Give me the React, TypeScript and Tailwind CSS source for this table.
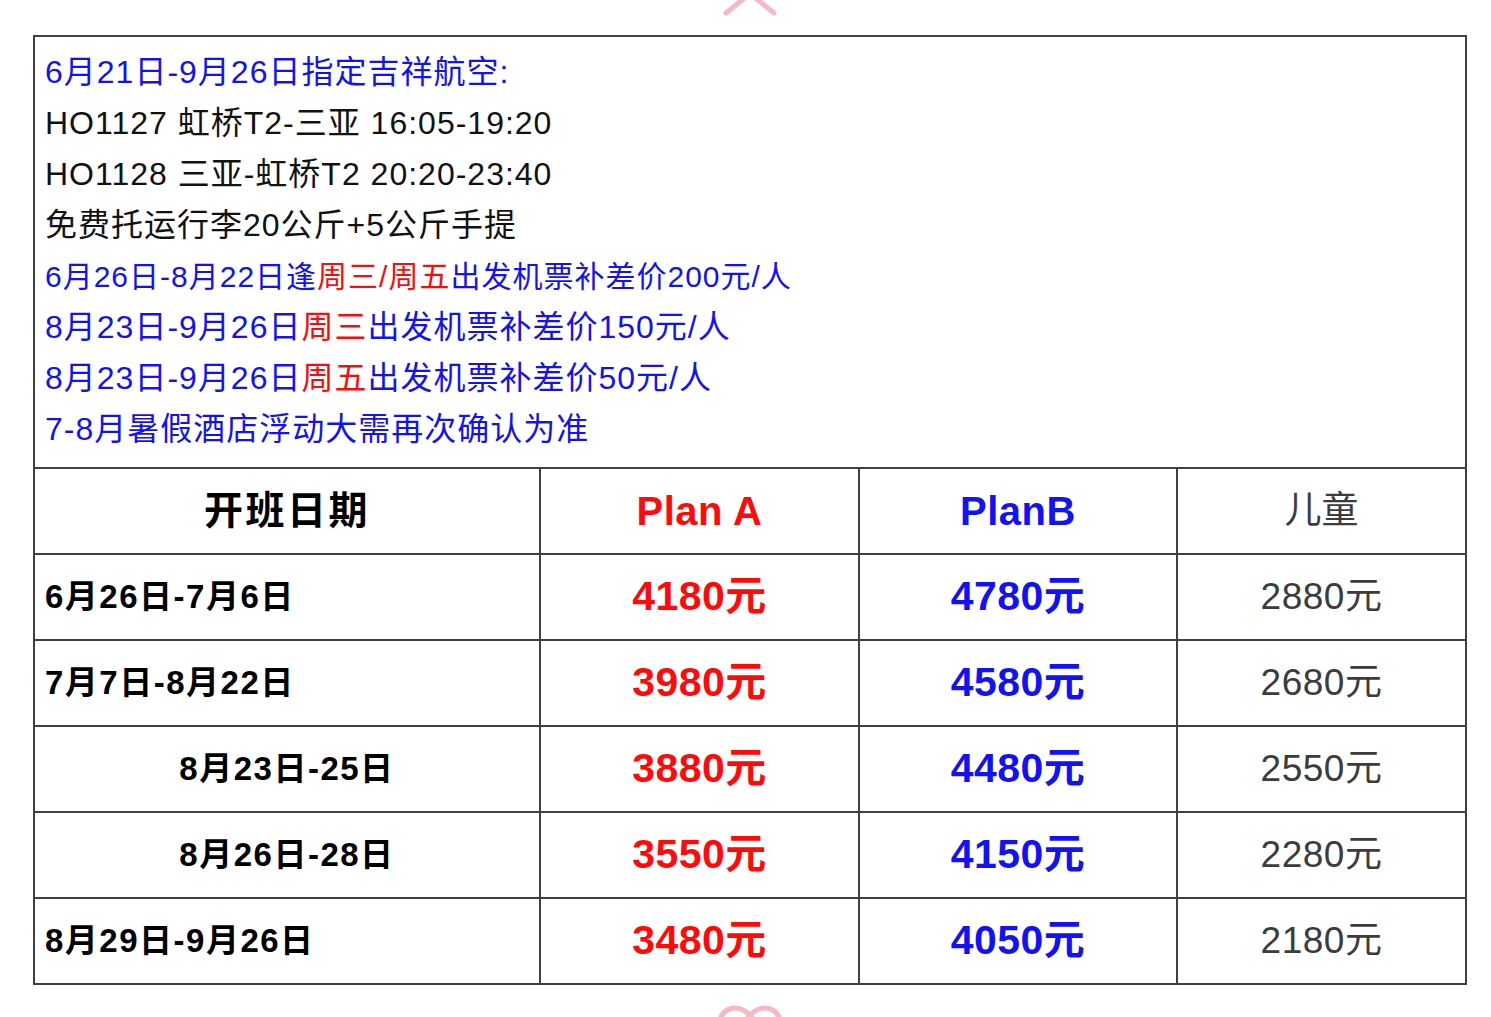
import React from "react";

type Seg = { t: string; red?: boolean };

const notes: { color: string; size: string; segs: Seg[] }[] = [
  { color: "text-[#1212f5]", size: "text-[32px]", segs: [{ t: "6月21日-9月26日指定吉祥航空:" }] },
  { color: "text-[#111]", size: "text-[32px]", segs: [{ t: "HO1127 虹桥T2-三亚 16:05-19:20" }] },
  { color: "text-[#111]", size: "text-[32px]", segs: [{ t: "HO1128 三亚-虹桥T2 20:20-23:40" }] },
  { color: "text-[#111]", size: "text-[32px]", segs: [{ t: "免费托运行李20公斤+5公斤手提" }] },
  {
    color: "text-[#1212f5]",
    size: "text-[30px]",
    segs: [{ t: "6月26日-8月22日逢" }, { t: "周三/周五", red: true }, { t: "出发机票补差价200元/人" }],
  },
  {
    color: "text-[#1212f5]",
    size: "text-[32px]",
    segs: [{ t: "8月23日-9月26日" }, { t: "周三", red: true }, { t: "出发机票补差价150元/人" }],
  },
  {
    color: "text-[#1212f5]",
    size: "text-[32px]",
    segs: [{ t: "8月23日-9月26日" }, { t: "周五", red: true }, { t: "出发机票补差价50元/人" }],
  },
  { color: "text-[#1212f5]", size: "text-[32px]", segs: [{ t: "7-8月暑假酒店浮动大需再次确认为准" }] },
];

const rows = [
  { date: "6月26日-7月6日", center: false, a: "4180元", b: "4780元", kid: "2880元" },
  { date: "7月7日-8月22日", center: false, a: "3980元", b: "4580元", kid: "2680元" },
  { date: "8月23日-25日", center: true, a: "3880元", b: "4480元", kid: "2550元" },
  { date: "8月26日-28日", center: true, a: "3550元", b: "4150元", kid: "2280元" },
  { date: "8月29日-9月26日", center: false, a: "3480元", b: "4050元", kid: "2180元" },
];

// pink ribbon bits peeking in at the top and bottom edges
function RibbonTop() {
  return (
    <svg width="60" height="20" viewBox="0 0 60 20" className="block">
      <path d="M27 -4 L6 13" stroke="#f5b9c5" strokeWidth="5" strokeLinecap="round" fill="none" />
      <path d="M33 -4 L54 13" stroke="#f5b9c5" strokeWidth="5" strokeLinecap="round" fill="none" />
    </svg>
  );
}

function RibbonBottom() {
  return (
    <svg width="70" height="30" viewBox="0 0 70 30" className="block">
      <path
        d="M5 16 C8 4 22 -1 35 11 C48 -1 62 4 65 16"
        stroke="#f5b9c5"
        strokeWidth="5"
        strokeLinecap="round"
        fill="none"
      />
      <path d="M35 11 C30 18 26 24 24 30 M35 11 C40 18 44 24 46 30" stroke="#f5b9c5" strokeWidth="5" strokeLinecap="round" fill="none" />
    </svg>
  );
}

export default function App() {
  return (
    <div className="min-h-screen bg-white font-['Liberation_Sans','Noto_Sans_CJK_SC',sans-serif] overflow-hidden">
      <div className="ml-[33px] w-[1434px]">
        {/* Top ribbon */}
        <div className="h-[35px] flex justify-center">
          <RibbonTop />
        </div>

        <div className="border-2 border-[#404040]">
          {/* Notes */}
          <div className="pl-[10px] pt-[10px] pb-[12px] leading-[51px] tracking-[1px]">
            {notes.map((n, i) => (
              <p key={i} className={`${n.color} ${n.size}`}>
                {n.segs.map((s, j) => (
                  <span key={j} className={s.red ? "text-[#ff0a0a]" : ""}>
                    {s.t}
                  </span>
                ))}
              </p>
            ))}
          </div>

          {/* Price table */}
          <div className="grid grid-cols-[504px_319px_318px_1fr] h-[86px] border-t-2 border-[#404040]">
            <div className="flex items-center justify-center text-[39px] font-bold text-black tracking-[2.5px]">
              开班日期
            </div>
            <div className="flex items-center justify-center border-l-2 border-[#404040] text-[40px] font-bold text-[#ff0a0a] tracking-[0.5px]">
              Plan A
            </div>
            <div className="flex items-center justify-center border-l-2 border-[#404040] text-[40px] font-bold text-[#1212f5] tracking-[0.5px]">
              PlanB
            </div>
            <div className="flex items-center justify-center border-l-2 border-[#404040] text-[37px] text-[#3c3c3c]">
              儿童
            </div>
          </div>

          {rows.map((r) => (
            <div
              key={r.date}
              className="grid grid-cols-[504px_319px_318px_1fr] h-[86px] border-t-2 border-[#404040]"
            >
              <div
                className={`flex items-center text-[33px] font-bold text-black tracking-[1.5px] ${
                  r.center ? "justify-center" : "pl-[10px]"
                }`}
              >
                {r.date}
              </div>
              <div className="flex items-center justify-center border-l-2 border-[#404040] text-[41px] font-bold text-[#ff0a0a] tracking-[0.5px]">
                {r.a}
              </div>
              <div className="flex items-center justify-center border-l-2 border-[#404040] text-[41px] font-bold text-[#1212f5] tracking-[0.5px]">
                {r.b}
              </div>
              <div className="flex items-center justify-center border-l-2 border-[#404040] text-[37px] text-[#3c3c3c] tracking-[0.5px]">
                {r.kid}
              </div>
            </div>
          ))}
        </div>

        {/* Bottom ribbon */}
        <div className="flex justify-center mt-[19px]">
          <RibbonBottom />
        </div>
      </div>
    </div>
  );
}
